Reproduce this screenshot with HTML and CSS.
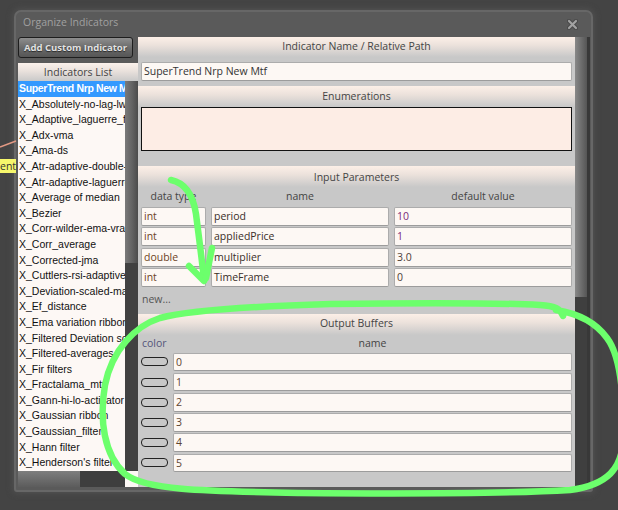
FILE: index.html
```html
<!DOCTYPE html>
<html>
	<head>
		<meta charset="UTF-8">
		<title>Organize Indicators</title>
		<link rel="stylesheet" href="styles.css">
	</head>
	<body>
		<div class="desk">
			<div class="window">
				<div class="titlebar">
					<span class="title">Organize Indicators</span>
					<svg class="close" width="11" height="11" viewBox="0 0 11 11">
						<path d="M2 2 L9 9 M9 2 L2 9" stroke="#4a4a4a" stroke-width="4.4" stroke-linecap="round"/>
						<path d="M2 2 L9 9 M9 2 L2 9" stroke="#a2a2a2" stroke-width="2.2" stroke-linecap="round"/>
					</svg>
				</div>
				<div class="body">
					<div class="side">
						<button class="add-btn">Add Custom Indicator</button>
						<div class="list-head">Indicators List</div>
						<div class="list-box">
							<div class="list-area">
								<ul class="list">
									<li class="sel">SuperTrend Nrp New Mtf</li>
									<li>X_Absolutely-no-lag-lwma</li>
									<li>X_Adaptive_laguerre_filter</li>
									<li>X_Adx-vma</li>
									<li>X_Ama-ds</li>
									<li>X_Atr-adaptive-double-smoothed</li>
									<li>X_Atr-adaptive-laguerre</li>
									<li>X_Average of median</li>
									<li>X_Bezier</li>
									<li>X_Corr-wilder-ema-vrange</li>
									<li>X_Corr_average</li>
									<li>X_Corrected-jma</li>
									<li>X_Cuttlers-rsi-adaptive</li>
									<li>X_Deviation-scaled-ma</li>
									<li>X_Ef_distance</li>
									<li>X_Ema variation ribbon</li>
									<li>X_Filtered Deviation scaled</li>
									<li>X_Filtered-averages</li>
									<li>X_Fir filters</li>
									<li>X_Fractalama_mtx</li>
									<li>X_Gann-hi-lo-activator</li>
									<li>X_Gaussian ribbon</li>
									<li>X_Gaussian_filter</li>
									<li>X_Hann filter</li>
									<li>X_Henderson's filter</li>
								</ul>
								<div class="vbar list-vbar"><div class="thumb"></div></div>
							</div>
							<div class="hbar">
								<div class="thumb"></div>
								<div class="track"></div>
								<div class="corner"></div>
							</div>
						</div>
					</div>

					<div class="pane">
						<div class="pane-main">
							<div class="sec-head first">Indicator Name / Relative Path</div>
							<div class="field name-field">SuperTrend Nrp New Mtf</div>

							<div class="sec-head">Enumerations</div>
							<div class="enum-box"></div>

							<div class="sec-head params-head">Input Parameters</div>
							<div class="params">
								<div class="col-head">data type</div>
								<div class="col-head">name</div>
								<div class="col-head">default value</div>

								<div class="field t-type">int</div>
								<div class="field t-name">period</div>
								<div class="field t-num">10</div>

								<div class="field t-type">int</div>
								<div class="field t-name">appliedPrice</div>
								<div class="field t-num">1</div>

								<div class="field t-type">double</div>
								<div class="field t-name">multiplier</div>
								<div class="field t-val">3.0</div>

								<div class="field t-type">int</div>
								<div class="field t-name">TimeFrame</div>
								<div class="field t-val">0</div>
							</div>
							<div class="new-link">new...</div>

							<div class="sec-head out-head">Output Buffers</div>
							<div class="buffers">
								<div class="col-head color-head">color</div>
								<div class="col-head">name</div>

								<div class="swatch"></div><div class="field t-buf">0</div>
								<div class="swatch"></div><div class="field t-buf">1</div>
								<div class="swatch"></div><div class="field t-buf">2</div>
								<div class="swatch"></div><div class="field t-buf">3</div>
								<div class="swatch"></div><div class="field t-buf">4</div>
								<div class="swatch"></div><div class="field t-buf">5</div>
							</div>
						</div>
						<div class="vbar pane-vbar"><div class="thumb"></div></div>
					</div>
				</div>
			</div>

			<div class="tip">ent</div>

			<!-- hand drawn marks on top of the screenshot -->
			<svg class="marks" width="618" height="510" viewBox="0 0 618 510">
				<path d="M0 147 L16 141" stroke="#e49a84" stroke-width="1.4" fill="none"/>
				<g stroke="#6cff6c" stroke-width="6.5" fill="none" stroke-linecap="round" stroke-linejoin="round">
					<path d="M563 316 C560 309 556 306 540 305 C480 302 400 303 330 304 C260 306 190 310 160 318 C135 326 112 350 105 385 C99 420 104 455 125 474 C145 490 200 491 300 493 C420 494 520 493 570 490 C608 485 622 468 623 440 C624 400 622 358 607 338 C594 320 575 313 556 310"/>
					<path d="M171 180 C185 183 193 194 196 214 C199 238 202 260 204 280"/>
					<path d="M189 266 L204 281"/>
					<path d="M212 248 L206 278"/>
				</g>
			</svg>
		</div>
	</body>
</html>
```
FILE: styles.css
```css
* {
	box-sizing: border-box;
}

body {
	margin: 0;
	background: #444;
	font-family: "Open Sans", sans-serif;
	font-size: 10.5px;
	color: #444;
}

.desk {
	position: relative;
	width: 618px;
	height: 510px;
	overflow: hidden;
	padding: 10px 0 0 14px;
}

.window {
	width: 579px;
	height: 482px;
	border: 2px solid #676767;
	border-radius: 7px 7px 3px 3px;
	background: #5a5a5a;
	padding: 0 1px 3px 2px;
	display: flex;
	flex-direction: column;
	box-shadow: 0 0 6px 1px #525252;
}

.titlebar {
	height: 25px;
	flex-shrink: 0;
	display: flex;
	justify-content: space-between;
	align-items: flex-start;
	padding: 3px 12px 0 5px;
}

.title {
	color: #a0a0a0;
	line-height: 15px;
}

.close {
	margin-top: 4px;
}

.body {
	display: flex;
	height: 450px;
	flex-shrink: 0;
}

/* left column */
.side {
	width: 120px;
	display: flex;
	flex-direction: column;
}

.add-btn {
	flex-shrink: 0;
	width: 115px;
	height: 21px;
	margin: 0 0 5px 0;
	padding: 0;
	border: 1px solid #1e1e1e;
	border-radius: 3px;
	background: linear-gradient(#8e8e8e, #6c6c6c 50%, #555);
	color: #e2e2e2;
	font-family: "Open Sans", sans-serif;
	font-size: 9.5px;
	font-weight: bold;
	text-shadow: 0 1px 1px #2a2a2a;
}

.list-head {
	flex-shrink: 0;
	height: 18px;
	line-height: 18px;
	text-align: center;
	background: linear-gradient(#fbf1eb, #e9e1dc 45%, #c9c9c9);
	color: #444;
}

.list-box {
	flex: 1;
	min-height: 0;
	display: flex;
	flex-direction: column;
}

.list-area {
	flex: 1;
	display: flex;
	min-height: 0;
}

.list {
	margin: 0;
	padding: 0;
	list-style: none;
	width: 107px;
	background: #fdf8f5;
	overflow: hidden;
	font-family: "Liberation Sans", Arial, sans-serif;
	font-size: 10.5px;
	line-height: 15.6px;
	color: #111;
}

.list li {
	white-space: nowrap;
	padding-left: 1px;
}

.list li.sel {
	background: #3399ff;
	color: #fff;
	font-weight: bold;
	letter-spacing: -0.35px;
}

.vbar {
	width: 13px;
	background: #414141;
}

.list-vbar .thumb {
	height: 182px;
	background: linear-gradient(to right, #7a7a7a, #626262 55%, #4b4b4b);
}

.hbar {
	flex-shrink: 0;
	height: 16px;
	display: flex;
}

.hbar .thumb {
	width: 62px;
	background: linear-gradient(#7e7e7e, #5c5c5c);
}

.hbar .track {
	flex: 1;
	background: #3e3e3e;
}

.hbar .corner {
	width: 13px;
	background: #fdf8f5;
}

/* right pane */
.pane {
	flex: 1;
	display: flex;
	background: #c8c8c8;
}

.pane-main {
	flex: 1;
	display: flex;
	flex-direction: column;
}

.pane-vbar {
	width: 15px;
	background: #3f3f3f;
	border-right: 3px solid #383838;
}

.pane-vbar .thumb {
	height: 260px;
	background: linear-gradient(to right, #888, #6e6e6e 50%, #555);
}

.sec-head {
	flex-shrink: 0;
	height: 21px;
	line-height: 20px;
	text-align: center;
	color: #444;
	background: linear-gradient(#fcefe7, #ece2dc 40%, #c8c8c8);
}

.sec-head.first {
	height: 20px;
	line-height: 18px;
}

.params-head {
	margin-top: 15px;
	line-height: 22px;
}

.out-head {
	margin-top: 7px;
	line-height: 19px;
}

.field {
	background: #fdf8f4;
	border: 1px solid #acacac;
	border-bottom-color: #9c9c9c;
	border-radius: 2px;
	padding-left: 2px;
	line-height: 17px;
	white-space: nowrap;
	overflow: hidden;
	color: #3c3030;
}

.name-field {
	flex-shrink: 0;
	height: 19px;
	margin: 5px 3px;
	color: #333;
}

.enum-box {
	flex-shrink: 0;
	height: 44px;
	margin: 0 3px;
	background: #fdede5;
	border: 1px solid #111;
}

.params {
	display: grid;
	grid-template-columns: 65px 1fr 1fr;
	grid-template-rows: 17px;
	grid-auto-rows: 19px;
	gap: 1.5px 5px;
	padding: 1px 3px 0;
}

.col-head {
	text-align: center;
	line-height: 17px;
	color: #444;
}

.t-type {
	color: #6e4424;
}

.t-name {
	color: #3a2e28;
}

.t-num {
	color: #7a2a7a;
}

.t-val {
	color: #4e4038;
}

.t-buf {
	color: #5e4430;
}

.new-link {
	margin-top: 4px;
	padding-left: 4px;
	line-height: 16px;
	color: #555;
}

.buffers {
	display: grid;
	grid-template-columns: 27px 1fr;
	grid-template-rows: 16px;
	grid-auto-rows: 18.5px;
	gap: 1.7px 5px;
	padding: 0 3px;
}

.color-head {
	text-align: left;
	padding-left: 1px;
	color: #55557a;
}

.buffers .field {
	line-height: 16.5px;
}

.swatch {
	align-self: center;
	height: 9px;
	border: 1.5px solid #222;
	border-radius: 4px;
}

/* things lying over the window */
.tip {
	position: absolute;
	left: 0;
	top: 159px;
	width: 16px;
	height: 14px;
	background: #f7f76c;
	color: #333;
	line-height: 14px;
	text-align: right;
	overflow: hidden;
}

.marks {
	position: absolute;
	left: 0;
	top: 0;
	pointer-events: none;
}
```
